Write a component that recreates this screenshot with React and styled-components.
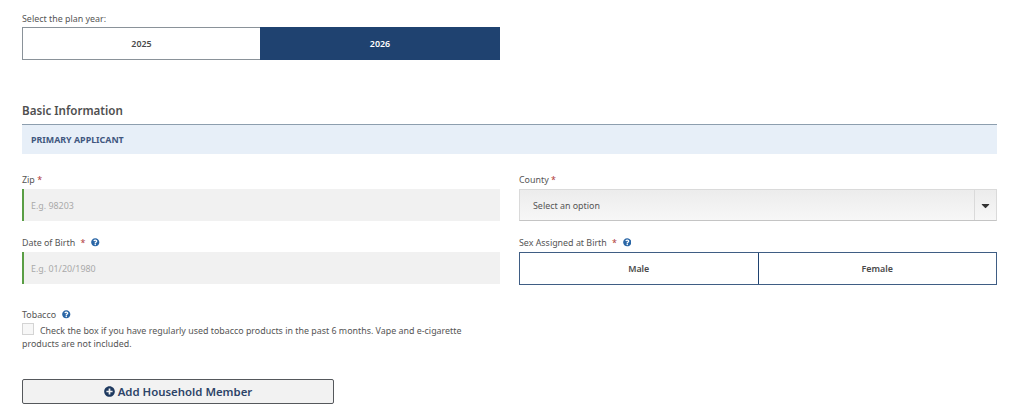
import styled, { createGlobalStyle } from "styled-components";
import { FaCaretDown, FaPlusCircle, FaQuestionCircle } from "react-icons/fa";

const GlobalStyle = createGlobalStyle`
  html, body {
    margin: 0;
    background: #fff;
  }
  body {
    font-family: "Noto Sans", "Open Sans", sans-serif;
    font-size: 8.9px;
    color: #555;
  }
  * {
    box-sizing: border-box;
  }
`;

const HelpIcon = () => (
  <Help>
    <FaQuestionCircle />
  </Help>
);

export default function App() {
  return (
    <Page>
      <GlobalStyle />
      <YearBlock>
        <Label>Select the plan year:</Label>
        <Toggle>
          <ToggleOption>2025</ToggleOption>
          <ToggleOption $active>2026</ToggleOption>
        </Toggle>
      </YearBlock>

      <SectionTitle>Basic Information</SectionTitle>
      <Banner>PRIMARY APPLICANT</Banner>

      <FieldGrid>
        <Field>
          <Label>
            Zip <Required>*</Required>
          </Label>
          <TextInput>E.g. 98203</TextInput>
        </Field>
        <Field>
          <Label>
            County <Required>*</Required>
          </Label>
          <Select>
            <SelectValue>Select an option</SelectValue>
            <SelectArrow>
              <FaCaretDown />
            </SelectArrow>
          </Select>
        </Field>
        <Field>
          <Label>
            Date of Birth <Required $spaced>*</Required>
            <HelpIcon />
          </Label>
          <TextInput>E.g. 01/20/1980</TextInput>
        </Field>
        <Field>
          <Label>
            Sex Assigned at Birth <Required $spaced>*</Required>
            <HelpIcon />
          </Label>
          <SexToggle>
            <SexOption>Male</SexOption>
            <SexOption>Female</SexOption>
          </SexToggle>
        </Field>
      </FieldGrid>

      <Tobacco>
        <Label>
          Tobacco
          <HelpIcon />
        </Label>
        <CheckText>
          <Checkbox />
          Check the box if you have regularly used tobacco products in the past 6 months. Vape and e-cigarette products
          are not included.
        </CheckText>
      </Tobacco>

      <AddButton>
        <FaPlusCircle />
        Add Household Member
      </AddButton>
    </Page>
  );
}

const Page = styled.div`
  width: 1024px;
  height: 420px;
  overflow: hidden;
  padding: 12px 27px 0 22px;
`;

const YearBlock = styled.div`
  width: 478px;
`;

const Label = styled.div`
  display: flex;
  align-items: center;
  height: 13px;
  font-size: 8.9px;
  line-height: 13px;
  color: #555;
  white-space: pre-wrap;
`;

const Toggle = styled.div`
  display: grid;
  grid-template-columns: 238px 240px;
  height: 33px;
  margin-top: 2px;
`;

const ToggleOption = styled.div`
  display: flex;
  align-items: center;
  justify-content: center;
  font-size: 8.9px;
  font-weight: 600;
  color: ${(p) => (p.$active ? "#fff" : "#4a4a4a")};
  background: ${(p) => (p.$active ? "#1f4270" : "#fff")};
  border: 1px solid ${(p) => (p.$active ? "#1f4270" : "#8a9299")};
  border-right-width: ${(p) => (p.$active ? "1px" : "0")};
`;

const SectionTitle = styled.h2`
  margin: 42px 0 0;
  height: 18px;
  font-size: 11.6px;
  line-height: 18px;
  font-weight: 600;
  color: #4f4f4f;
`;

const Banner = styled.div`
  height: 30px;
  margin-top: 4px;
  padding-left: 9px;
  display: flex;
  align-items: center;
  font-size: 8.9px;
  font-weight: 700;
  color: #40577f;
  background: #e7eff8;
  border-top: 1px solid #8d9eae;
`;

const FieldGrid = styled.div`
  display: grid;
  grid-template-columns: 478px 478px;
  column-gap: 19px;
  row-gap: 15px;
  margin-top: 19px;
`;

const Field = styled.div`
  display: flex;
  flex-direction: column;
  gap: 3px;
`;

const Required = styled.span`
  margin-left: ${(p) => (p.$spaced ? "3px" : "0")};
  color: #b03a3a;
`;

const Help = styled.span`
  display: inline-flex;
  margin-left: 6px;
  font-size: 8.5px;
  color: #2a66a6;
`;

const TextInput = styled.div`
  height: 32px;
  padding-left: 7px;
  display: flex;
  align-items: center;
  font-size: 8.9px;
  color: #a9a9a9;
  background: #f1f1f1;
  border-left: 2px solid #5a9e45;
`;

const Select = styled.div`
  height: 32px;
  display: flex;
  background: linear-gradient(#ececec, #f7f7f7);
  border: 1px solid #dadada;
  border-bottom-color: #c4c4c4;
`;

const SelectValue = styled.div`
  flex: 1;
  padding-left: 13px;
  display: flex;
  align-items: center;
  font-size: 8.9px;
  color: #555;
`;

const SelectArrow = styled.div`
  width: 22px;
  display: flex;
  align-items: center;
  justify-content: center;
  font-size: 13px;
  color: #333;
  border-left: 1px solid #dadada;
`;

const SexToggle = styled.div`
  display: flex;
  height: 33px;
  border: 1px solid #3f5d84;
`;

const SexOption = styled.div`
  flex: 1;
  display: flex;
  align-items: center;
  justify-content: center;
  font-size: 8.9px;
  font-weight: 600;
  color: #4a4a4a;
  &:first-child {
    border-right: 1px solid #1f4270;
  }
`;

const Tobacco = styled.div`
  width: 478px;
  margin-top: 23px;
`;

const CheckText = styled.div`
  margin-top: 2px;
  font-size: 8.9px;
  line-height: 13px;
  color: #555;
`;

const Checkbox = styled.span`
  display: inline-block;
  width: 12px;
  height: 12px;
  margin-right: 6px;
  vertical-align: -1px;
  background: #f7f7f7;
  border: 1px solid #d4d4d4;
`;

const AddButton = styled.button`
  display: flex;
  align-items: center;
  justify-content: center;
  gap: 3px;
  width: 312px;
  height: 25px;
  margin-top: 29px;
  padding: 0;
  font-family: inherit;
  font-size: 11.4px;
  font-weight: 600;
  color: #2d4468;
  background: #f2f2f2;
  border: 1px solid #55585c;
  border-radius: 2px;
  svg {
    font-size: 11px;
    color: #1f3a60;
  }
`;
